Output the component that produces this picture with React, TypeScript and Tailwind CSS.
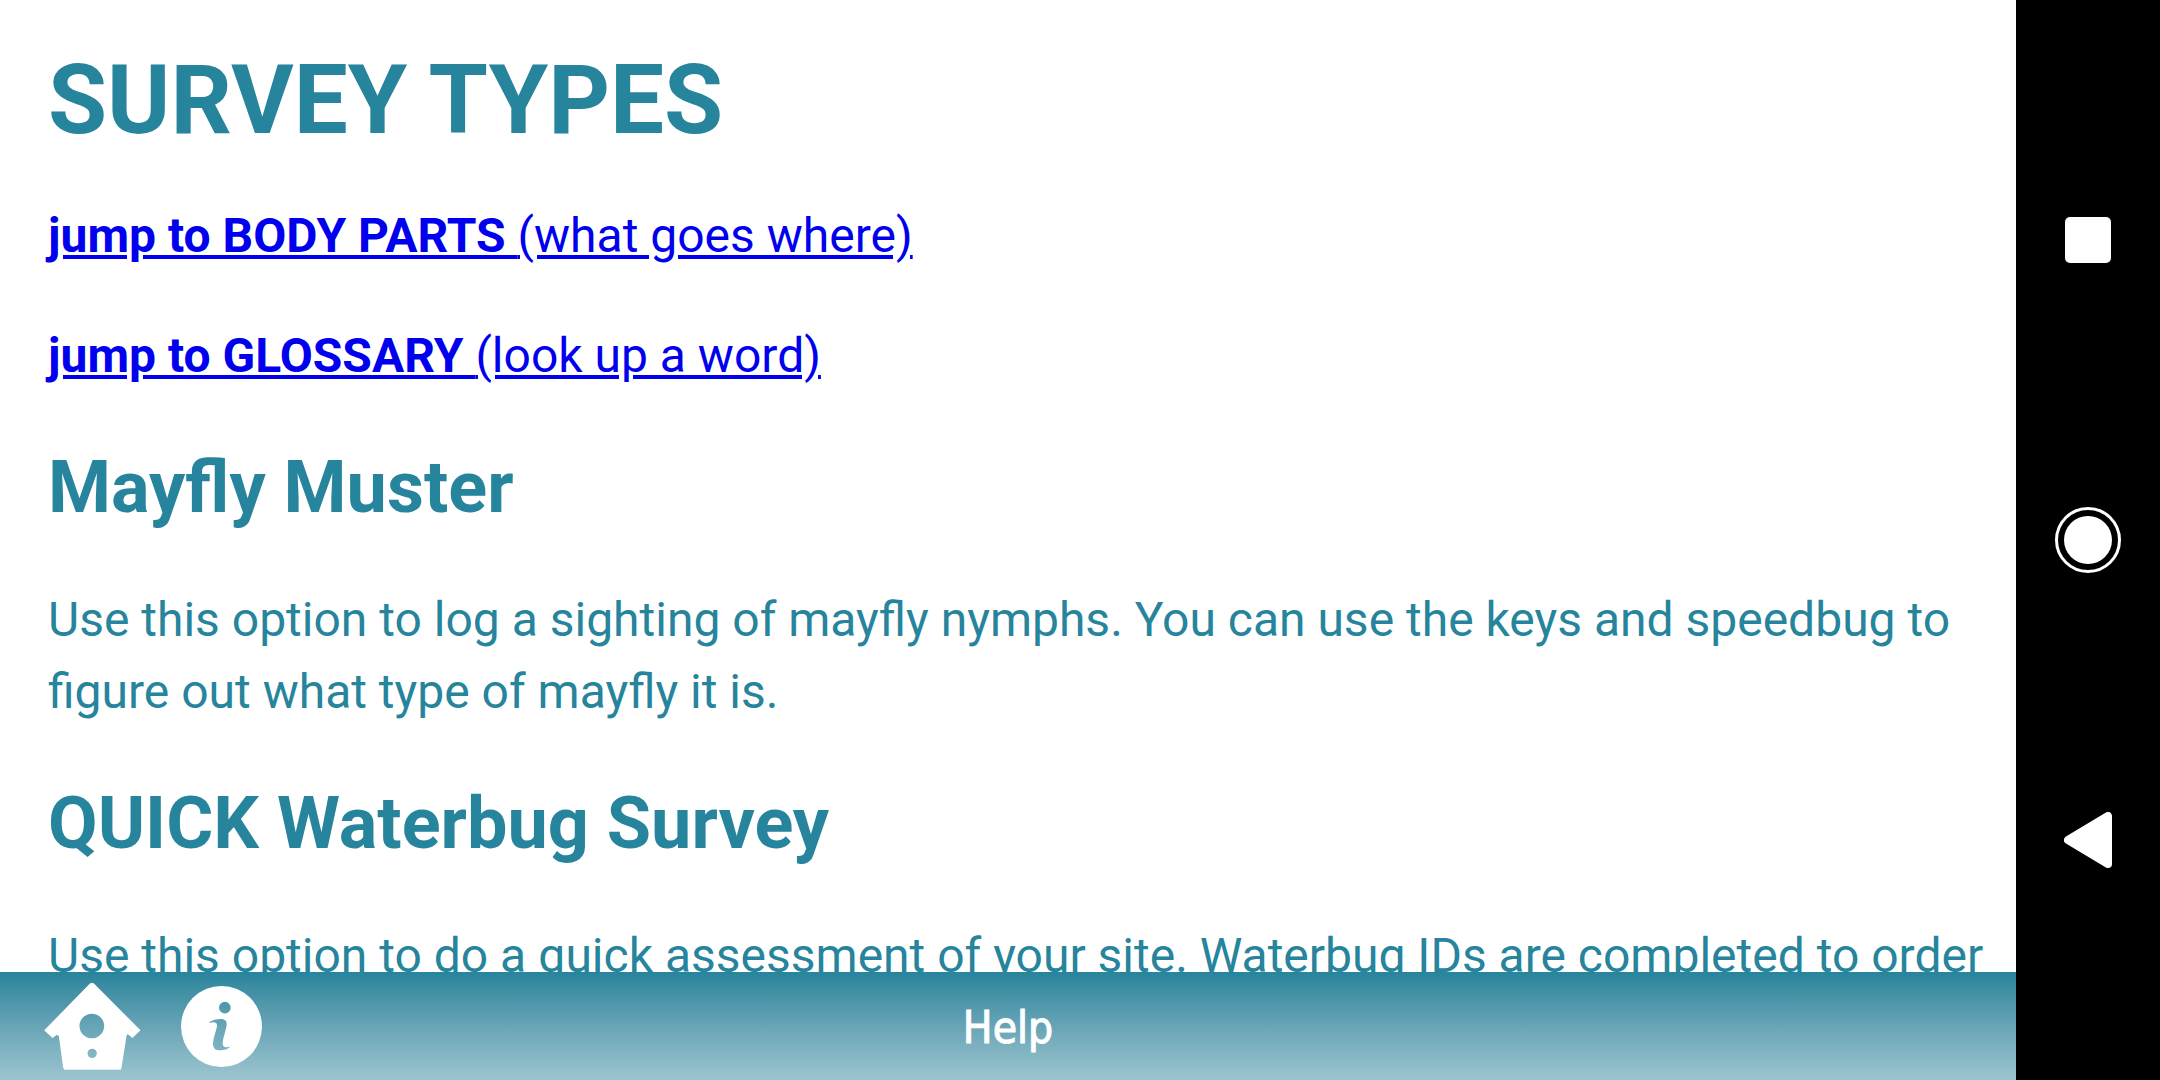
function BirdhouseIcon() {
  return (
    <svg viewBox="130 126 290 261" className="h-[87px] w-[97px]" fill="currentColor" aria-hidden="true">
      <path
        fillRule="evenodd"
        d="M268 127Q274 124 280 128L419 268L395 291L380 279L377 285L362 380L360 386H190L187 380L174 285L168 281L155 291L130 268ZM236 255a37 37 0 1 0 74 0a37 37 0 1 0 -74 0ZM260 337a14 14 0 1 0 28 0a14 14 0 1 0 -28 0Z"
      />
    </svg>
  );
}

function InfoIcon() {
  return (
    <svg viewBox="542 135 243 243" className="size-[81px]" fill="currentColor" aria-hidden="true">
      <path
        fillRule="evenodd"
        d="M542 256.500a121.500 121.500 0 1 0 243 0a121.500 121.500 0 1 0 -243 0ZM656 200a17 17 0 1 1 35 0a17 17 0 1 1 -35 0ZM627 243Q642 234 660 234Q679 234 679 248C679 264 667 290 667 308C667 319 678 321 690 316C684 325 671 328 658 328C645 328 638 321 638 308C638 288 650 267 650 252C650 243 640 242 627 246Z"
      />
    </svg>
  );
}

export default function App() {
  return (
    <div className="flex h-screen overflow-hidden bg-white font-['Roboto',sans-serif]">
      <div className="flex min-w-0 flex-1 flex-col">
        <main className="min-h-0 flex-1 overflow-hidden py-16 pr-6 pl-12 text-5xl leading-[72px] text-[#26849c]">
          <h1 className="mb-16 text-8xl leading-[72px] font-bold">SURVEY TYPES</h1>
          <p className="mb-12">
            <a href="#body-parts" className="text-[#0000ee] underline">
              <b>jump to BODY PARTS </b>(what goes where)
            </a>
          </p>
          <p>
            <a href="#glossary" className="text-[#0000ee] underline">
              <b>jump to GLOSSARY </b>(look up a word)
            </a>
          </p>
          <h2 className="my-15 text-7xl leading-[72px] font-bold">Mayfly Muster</h2>
          <p>
            Use this option to log a sighting of mayfly nymphs. You can use the keys and speedbug to
            figure out what type of mayfly it is.
          </p>
          <h2 className="my-15 text-7xl leading-[72px] font-bold">QUICK Waterbug Survey</h2>
          <p>
            Use this option to do a quick assessment of your site. Waterbug IDs are completed to order
          </p>
        </main>
        <footer className="grid h-27 shrink-0 grid-cols-[1fr_auto_1fr] items-center bg-linear-to-b from-[#26849c] to-[#9dc5d0] px-11 text-white">
          <div className="flex items-center gap-10">
            <button type="button" aria-label="Home">
              <BirdhouseIcon />
            </button>
            <button type="button" aria-label="Information">
              <InfoIcon />
            </button>
          </div>
          <span className="pt-1 font-['DejaVu_Sans_Condensed','DejaVu_Sans',sans-serif] text-[44px] leading-[52px] font-normal [-webkit-text-stroke:1px_white]">
            Help
          </span>
        </footer>
      </div>
      <nav aria-label="System" className="flex w-36 shrink-0 flex-col bg-black py-[90px] text-white">
        <button type="button" aria-label="Recent apps" className="flex flex-1 items-center justify-center">
          <span className="size-[46px] rounded-[5px] bg-white" />
        </button>
        <button type="button" aria-label="Home screen" className="flex flex-1 items-center justify-center">
          <svg viewBox="0 0 66 66" className="size-[66px]" aria-hidden="true">
            <circle cx="33" cy="33" r="31.500" fill="none" stroke="currentColor" strokeWidth="3" />
            <circle cx="33" cy="33" r="24" fill="currentColor" />
          </svg>
        </button>
        <button type="button" aria-label="Back" className="flex flex-1 items-center justify-center">
          <svg viewBox="0 0 48 56" className="h-14 w-12" aria-hidden="true">
            <path
              d="M4 28L44 4V52Z"
              fill="currentColor"
              stroke="currentColor"
              strokeWidth="8"
              strokeLinejoin="round"
            />
          </svg>
        </button>
      </nav>
    </div>
  );
}
